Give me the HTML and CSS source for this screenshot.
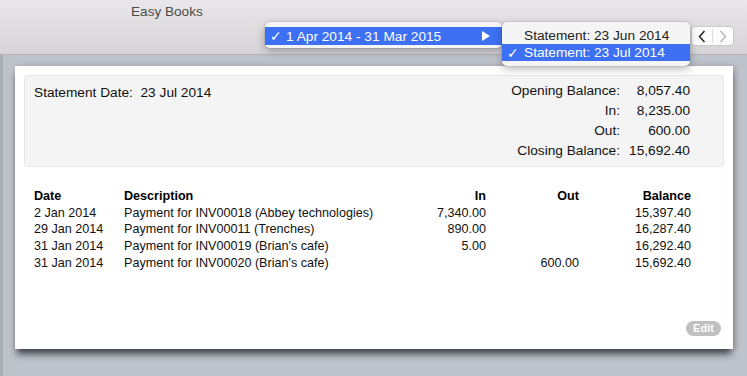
FILE: index.html
```html
<!DOCTYPE html>
<html>
<head>
<link rel="stylesheet" href="styles.css">
</head>
<body>
<div class="toolbar">
    <div class="title">Easy Books</div>
    <div class="controls">
        <div class="nav">
            <span class="nav-btn">
                <svg width="8" height="13" viewBox="0 0 8 13"><polyline points="6.5,1 1.5,6.5 6.5,12" fill="none" stroke="#2a2a2a" stroke-width="1.6"/></svg>
            </span>
            <span class="nav-sep"></span>
            <span class="nav-btn">
                <svg width="8" height="13" viewBox="0 0 8 13"><polyline points="1.5,1 6.5,6.5 1.5,12" fill="none" stroke="#b5b5b5" stroke-width="1.4"/></svg>
            </span>
        </div>
    </div>

    <div class="menu menu-years">
        <div class="item selected">
            <span class="check">✓</span>
            <span class="label">1 Apr 2014 - 31 Mar 2015</span>
            <span class="arrow"></span>
        </div>
    </div>

    <div class="menu menu-statements">
        <div class="item">
            <span class="check"></span>
            <span class="label">Statement: 23 Jun 2014</span>
        </div>
        <div class="item selected">
            <span class="check">✓</span>
            <span class="label">Statement: 23 Jul 2014</span>
        </div>
    </div>
</div>

<div class="main">
    <div class="card">
        <div class="summary">
            <div class="statement-date">Statement Date:&nbsp;&nbsp;23 Jul 2014</div>
            <div class="totals">
                <span>Opening Balance:</span><span>8,057.40</span>
                <span>In:</span><span>8,235.00</span>
                <span>Out:</span><span>600.00</span>
                <span>Closing Balance:</span><span>15,692.40</span>
            </div>
        </div>

        <div class="ledger">
            <div class="head">Date</div>
            <div class="head">Description</div>
            <div class="head num">In</div>
            <div class="head num">Out</div>
            <div class="head num">Balance</div>

            <div>2 Jan 2014</div>
            <div>Payment for INV00018 (Abbey technologies)</div>
            <div class="num">7,340.00</div>
            <div class="num"></div>
            <div class="num">15,397.40</div>

            <div>29 Jan 2014</div>
            <div>Payment for INV00011 (Trenches)</div>
            <div class="num">890.00</div>
            <div class="num"></div>
            <div class="num">16,287.40</div>

            <div>31 Jan 2014</div>
            <div>Payment for INV00019 (Brian's cafe)</div>
            <div class="num">5.00</div>
            <div class="num"></div>
            <div class="num">16,292.40</div>

            <div>31 Jan 2014</div>
            <div>Payment for INV00020 (Brian's cafe)</div>
            <div class="num"></div>
            <div class="num">600.00</div>
            <div class="num">15,692.40</div>
        </div>

        <div class="footer">
            <span class="edit">Edit</span>
        </div>
    </div>
</div>
</body>
</html>
```

FILE: styles.css
```css
html, body
{
    margin: 0;
    padding: 0;
}

body
{
    width: 747px;
    height: 376px;
    overflow: hidden;
    background: #bec2ca;
    font-family: "Liberation Sans", Arial, sans-serif;
    color: #111;
}

/* window toolbar */
.toolbar
{
    position: relative;
    height: 55px;
    box-sizing: border-box;
    border-bottom: 1px solid #b4b2b5;
    background: linear-gradient(#e9e7e9, #d5d3d5);
}

.title
{
    padding-left: 131px;
    padding-top: 4px;
    height: 18px;
    font-size: 13.6px;
    line-height: 16px;
    color: #4b4b4b;
}

.controls
{
    display: flex;
    justify-content: flex-end;
    padding-right: 13px;
    margin-top: 4px;
}

.nav
{
    display: flex;
    align-items: center;
    height: 20px;
    background: #fdfdfd;
    border: 1px solid #cacaca;
    border-radius: 4px;
    box-sizing: border-box;
}

.nav-btn
{
    width: 20px;
    display: flex;
    justify-content: center;
    align-items: center;
}

.nav-sep
{
    width: 1px;
    height: 14px;
    background: #dcdcdc;
}

/* popup menus */
.menu
{
    position: absolute;
    top: 22px;
    box-sizing: border-box;
    background: #f5f5f5;
    border-radius: 5px;
    box-shadow: 0 3px 8px rgba(0, 0, 0, 0.28), 0 0 0 1px rgba(0, 0, 0, 0.06);
    font-size: 13.7px;
}

.menu-years
{
    left: 265px;
    width: 237px;
    padding: 5px 0 3px 0;
}

.menu-statements
{
    left: 502px;
    width: 188px;
    padding: 5px 0 5px 0;
    z-index: 2;
}

.item
{
    display: flex;
    align-items: center;
    height: 17px;
    color: #222;
}

.menu-years .item
{
    height: 18px;
}

.item.selected
{
    background: #3d70f2;
    color: #fff;
}

.check
{
    width: 21px;
    padding-left: 5px;
    box-sizing: border-box;
    font-family: "DejaVu Sans", sans-serif;
    font-size: 14px;
    font-weight: bold;
}

.menu-statements .check
{
    width: 22px;
}

.label
{
    flex: 1;
}

.arrow
{
    width: 0;
    height: 0;
    border-top: 5px solid transparent;
    border-bottom: 5px solid transparent;
    border-left: 8px solid #fff;
    margin-right: 12px;
}

/* content */
.main
{
    height: 321px;
    box-sizing: border-box;
    padding: 11px 14px 0 12px;
    border-left: 3px solid #aaaeb5;
}

.card
{
    width: 718px;
    height: 283px;
    box-sizing: border-box;
    padding: 9px;
    background: #fff;
    display: flex;
    flex-direction: column;
    box-shadow: 0 7px 7px -2px rgba(35, 37, 45, 0.8), 2px 0 6px rgba(0, 0, 0, 0.18);
}

.summary
{
    height: 92px;
    box-sizing: border-box;
    display: flex;
    align-items: flex-start;
    justify-content: space-between;
    padding: 5px 33px 0 9px;
    background: #f4f4f4;
    border: 1px solid #e7e7e7;
    border-radius: 3px;
    font-size: 13.7px;
}

.statement-date
{
    padding-top: 2px;
    line-height: 20px;
}

.totals
{
    display: grid;
    grid-template-columns: auto 70px;
    line-height: 20px;
    text-align: right;
}

.ledger
{
    display: grid;
    grid-template-columns: 90px 270px 92px 93px 112px;
    margin-top: 21px;
    padding-left: 10px;
    font-size: 12.6px;
    line-height: 16.7px;
}

.head
{
    font-weight: bold;
    color: #000;
}

.num
{
    text-align: right;
}

.footer
{
    margin-top: auto;
    display: flex;
    justify-content: flex-end;
    padding: 0 3px 4px 0;
}

.edit
{
    width: 35px;
    height: 15px;
    border-radius: 8px;
    background: #c0c0c0;
    color: #fff;
    font-weight: bold;
    font-size: 11px;
    line-height: 15px;
    text-align: center;
}
```
